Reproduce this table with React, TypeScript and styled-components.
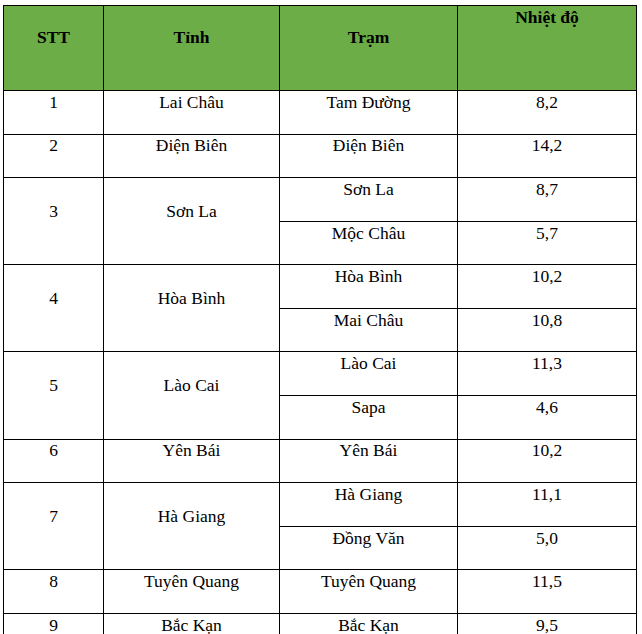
import styled, { createGlobalStyle } from "styled-components";

const GlobalStyle = createGlobalStyle`
  body {
    margin: 0;
    background: #ffffff;
    color: #000000;
  }
`;

const Page = styled.div`
  width: 642px;
  height: 634px;
  overflow: hidden;
  padding: 5px 0 0 3px;
  box-sizing: border-box;
`;

const Table = styled.table`
  width: 633px;
  border-collapse: collapse;
  table-layout: fixed;
  color: #000;
`;

const HeadRow = styled.tr`
  height: 85px;
  background: #6cad47;
`;

const HeadCell = styled.th<{ $top?: boolean }>`
  font-family: "Liberation Serif";
  font-size: 17.5px;
  border: 1px solid #000;
  font-weight: bold;
  text-align: center;
  vertical-align: ${(p) => (p.$top ? "top" : "middle")};
  padding: ${(p) => (p.$top ? "1px 4px 0" : "0 4px 22px")};
  line-height: 20px;
`;

const Row = styled.tr`
  height: 43.58px;
`;

const Cell = styled.td`
  font-family: "Liberation Serif";
  font-size: 17.5px;
  border: 1px solid #000;
  text-align: center;
  vertical-align: middle;
  padding: 0 4px 21px;
  line-height: 20px;
  white-space: nowrap;
`;

type Station = { name: string; temp: string };
type Province = { no: number; name: string; stations: Station[] };

const data: Province[] = [
  { no: 1, name: "Lai Châu", stations: [{ name: "Tam Đường", temp: "8,2" }] },
  { no: 2, name: "Điện Biên", stations: [{ name: "Điện Biên", temp: "14,2" }] },
  {
    no: 3,
    name: "Sơn La",
    stations: [
      { name: "Sơn La", temp: "8,7" },
      { name: "Mộc Châu", temp: "5,7" },
    ],
  },
  {
    no: 4,
    name: "Hòa Bình",
    stations: [
      { name: "Hòa Bình", temp: "10,2" },
      { name: "Mai Châu", temp: "10,8" },
    ],
  },
  {
    no: 5,
    name: "Lào Cai",
    stations: [
      { name: "Lào Cai", temp: "11,3" },
      { name: "Sapa", temp: "4,6" },
    ],
  },
  { no: 6, name: "Yên Bái", stations: [{ name: "Yên Bái", temp: "10,2" }] },
  {
    no: 7,
    name: "Hà Giang",
    stations: [
      { name: "Hà Giang", temp: "11,1" },
      { name: "Đồng Văn", temp: "5,0" },
    ],
  },
  { no: 8, name: "Tuyên Quang", stations: [{ name: "Tuyên Quang", temp: "11,5" }] },
  { no: 9, name: "Bắc Kạn", stations: [{ name: "Bắc Kạn", temp: "9,5" }] },
];

export default function App() {
  return (
    <>
      <GlobalStyle />
      <Page>
        <Table>
          <colgroup>
            <col style={{ width: 100 }} />
            <col style={{ width: 176 }} />
            <col style={{ width: 178 }} />
            <col style={{ width: 179 }} />
          </colgroup>
          <thead>
            <HeadRow>
              <HeadCell>STT</HeadCell>
              <HeadCell>Tỉnh</HeadCell>
              <HeadCell>Trạm</HeadCell>
              <HeadCell $top>Nhiệt độ</HeadCell>
            </HeadRow>
          </thead>
          <tbody>
            {data.map((p) =>
              p.stations.map((s, i) => (
                <Row key={`${p.no}-${i}`}>
                  {i === 0 && <Cell rowSpan={p.stations.length}>{p.no}</Cell>}
                  {i === 0 && <Cell rowSpan={p.stations.length}>{p.name}</Cell>}
                  <Cell>{s.name}</Cell>
                  <Cell>{s.temp}</Cell>
                </Row>
              ))
            )}
          </tbody>
        </Table>
      </Page>
    </>
  );
}
